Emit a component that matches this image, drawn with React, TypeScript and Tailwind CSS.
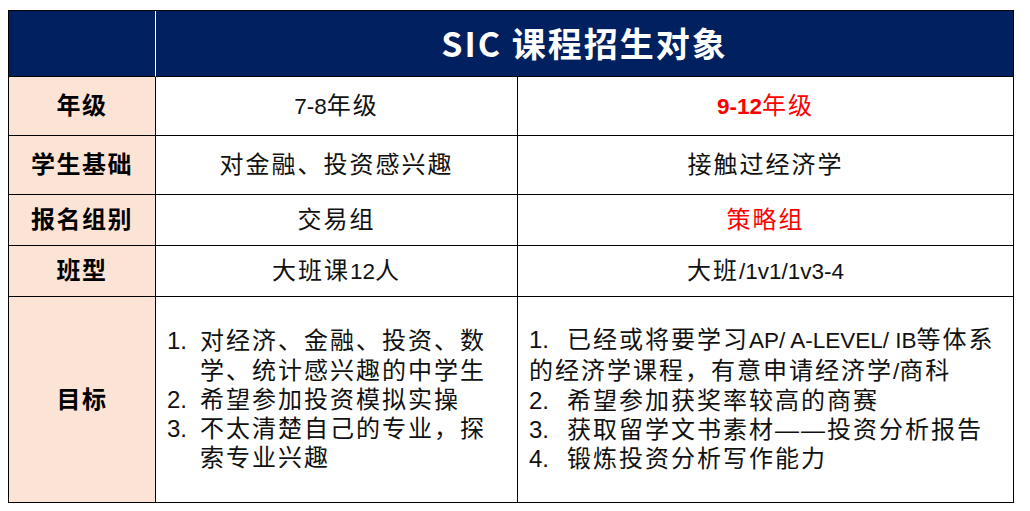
const base = "font-['Liberation_Sans','Noto_Sans_CJK_SC',sans-serif]"

type RowProps = {
  label: string
  left: React.ReactNode
  right: React.ReactNode
  last?: boolean
}

function Row({ label, left, right, last }: RowProps) {
  const b = last ? "" : "border-b border-black"
  return (
    <>
      <div
        className={`flex items-center justify-center border-r border-black bg-[#fbe4d5] text-[24px] font-bold tracking-[1.5px] text-black ${b}`}
      >
        {label}
      </div>
      <div className={`flex items-center justify-center border-r border-black ${b}`}>{left}</div>
      <div className={`flex items-center justify-center ${b}`}>{right}</div>
    </>
  )
}

function Latin({ children, bold }: { children: React.ReactNode; bold?: boolean }) {
  return <span className={`text-[22.5px] tracking-normal ${bold ? "font-bold" : ""}`}>{children}</span>
}

export default function App() {
  return (
    <div className={`min-h-[511px] w-[1030px] bg-white pl-2 pt-[10px] ${base}`}>
      <div className="grid w-[1006px] grid-cols-[147px_362px_495px] grid-rows-[66px_59px_59px_51px_51px_205px] border border-black text-[24px] leading-none tracking-[2px] text-[#111]">
        <div className="border-r border-b border-r-white border-b-black bg-[#002060]" />
        <div className="col-span-2 flex items-center justify-center border-b border-black bg-[#002060] pb-[2px] font-['Noto_Sans_CJK_SC',sans-serif] text-[34px] font-bold tracking-[2px] text-white">
          SIC 课程招生对象
        </div>

        <Row
          label="年级"
          left={
            <span>
              <Latin>7-8</Latin>年级
            </span>
          }
          right={
            <span className="text-[#ff0000]">
              <Latin bold>9-12</Latin>年级
            </span>
          }
        />
        <Row label="学生基础" left={<span>对金融、投资感兴趣</span>} right={<span>接触过经济学</span>} />
        <Row label="报名组别" left={<span>交易组</span>} right={<span className="text-[#ff0000]">策略组</span>} />
        <Row
          label="班型"
          left={
            <span>
              大班课<Latin>12</Latin>人
            </span>
          }
          right={
            <span>
              大班<Latin>/1v1/1v3-4</Latin>
            </span>
          }
        />
        <Row
          label="目标"
          last
          left={
            <div className="w-full self-center pl-[11px] leading-[29.3px]">
              <div className="flex">
                <span className="w-[33px] shrink-0 tracking-normal">1.</span>
                <span>
                  对经济、金融、投资、数
                  <br />
                  学、统计感兴趣的中学生
                </span>
              </div>
              <div className="flex">
                <span className="w-[33px] shrink-0 tracking-normal">2.</span>
                <span>希望参加投资模拟实操</span>
              </div>
              <div className="flex">
                <span className="w-[33px] shrink-0 tracking-normal">3.</span>
                <span>
                  不太清楚自己的专业，探
                  <br />
                  索专业兴趣
                </span>
              </div>
            </div>
          }
          right={
            <div className="w-full self-center pl-[11px] leading-[29.3px]">
              <div>
                <span className="inline-block w-[38px] tracking-normal">1.</span>
                已经或将要学习<Latin>AP/ A-LEVEL/ IB</Latin>等体系
              </div>
              <div>
                的经济学课程，有意申请经济学<Latin>/</Latin>商科
              </div>
              <div>
                <span className="inline-block w-[38px] tracking-normal">2.</span>
                希望参加获奖率较高的商赛
              </div>
              <div>
                <span className="inline-block w-[38px] tracking-normal">3.</span>
                获取留学文书素材——投资分析报告
              </div>
              <div>
                <span className="inline-block w-[38px] tracking-normal">4.</span>
                锻炼投资分析写作能力
              </div>
            </div>
          }
        />
      </div>
    </div>
  )
}
